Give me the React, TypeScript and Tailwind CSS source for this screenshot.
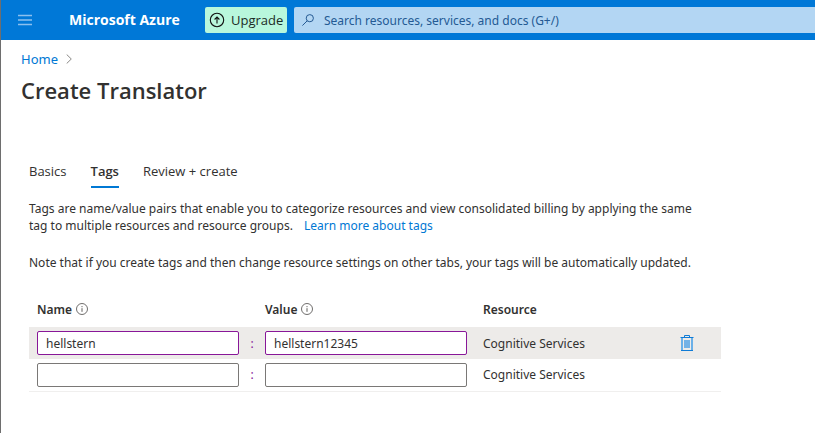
import { useState } from "react";

type Tag = { name: string; value: string };

function InfoIcon() {
  return (
    <svg className="size-3 shrink-0" viewBox="0 0 12 12" fill="none" stroke="#605e5c" aria-hidden="true">
      <circle cx="6" cy="6" r="5.5" strokeWidth="0.9" />
      <path d="M6 5.2v3.6M6 3.1v1.1" strokeWidth="1" />
    </svg>
  );
}

function TrashIcon() {
  return (
    <svg className="h-4 w-3.5" viewBox="0 0 14 16" fill="none" aria-hidden="true">
      <path d="M2 3v12M12 3v12" stroke="#6bb0e8" strokeWidth="2" />
      <rect x="4" y="5" width="6" height="8" fill="#74b2e6" />
      <path d="M0.5 2.5h13M1 15.5h12M4.5 2.5v-2h5v2" stroke="#0f7bd6" strokeWidth="1" />
    </svg>
  );
}

function Header() {
  return (
    <header className="flex h-10 items-center bg-[#0078d7]">
      <button type="button" aria-label="Show portal menu" className="flex h-10 w-12 items-center justify-center">
        <svg className="h-3 w-3.5" viewBox="0 0 14 12" fill="none" stroke="#8cc0ee" aria-hidden="true">
          <path d="M0 1.5h14M0 6h14M0 10.5h14" strokeWidth="1.5" />
        </svg>
      </button>
      <a
        href="#portal"
        className="ml-5 w-34 font-['Open_Sans',sans-serif] text-sm leading-5 font-bold whitespace-nowrap text-white"
      >
        Microsoft Azure
      </a>
      <button
        type="button"
        className="flex h-[26px] w-[82px] shrink-0 items-center gap-1.5 rounded-xs bg-[#b8f7dc] pl-1 font-['Open_Sans',sans-serif] text-[13px] text-[#1b2b25]"
      >
        <svg className="size-4 shrink-0" viewBox="0 0 16 16" fill="none" stroke="#111" aria-hidden="true">
          <circle cx="8" cy="8" r="6.7" strokeWidth="1.1" />
          <path d="M8 11.5v-6M5.6 7.5 8 5.1l2.4 2.4" strokeWidth="1.1" />
        </svg>
        Upgrade
      </button>
      <label className="ml-[7px] flex h-[26px] min-w-0 flex-1 items-center gap-2.5 rounded-l-xs bg-[#b3d6f3] pl-2">
        <svg className="size-3 shrink-0" viewBox="0 0 12 12" fill="none" stroke="#255a93" aria-hidden="true">
          <circle cx="7.8" cy="4.2" r="3.6" />
          <path d="M5.2 6.8.4 11.6" />
        </svg>
        <input
          type="search"
          aria-label="Search resources, services, and docs"
          placeholder="Search resources, services, and docs (G+/)"
          className="min-w-0 flex-1 bg-transparent outline-none placeholder:text-[#245a94]"
        />
      </label>
    </header>
  );
}

function Tabs() {
  const tab = "h-[26px] border-b-2 pb-1.5";
  return (
    <nav role="tablist" className="mt-14 ml-2 flex gap-6 font-['Open_Sans',sans-serif] text-[13px] leading-[18px]">
      <button type="button" role="tab" aria-selected="false" className={`${tab} border-transparent`}>
        Basics
      </button>
      <button type="button" role="tab" aria-selected="true" className={`${tab} border-[#0078d4] font-semibold`}>
        Tags
      </button>
      <button type="button" role="tab" aria-selected="false" className={`${tab} border-transparent`}>
        Review + create
      </button>
    </nav>
  );
}

function TagsTable() {
  const [tags, setTags] = useState<Tag[]>([
    { name: "hellstern", value: "hellstern12345" },
    { name: "", value: "" },
  ]);

  const update = (index: number, change: Partial<Tag>) =>
    setTags(tags.map((tag, i) => (i === index ? { ...tag, ...change } : tag)));

  return (
    <table className="mt-5 w-full table-fixed text-left">
      <colgroup>
        <col className="w-[210px]" />
        <col className="w-[26px]" />
        <col className="w-[202px]" />
        <col />
        <col className="w-[41px]" />
      </colgroup>
      <thead>
        <tr className="h-9">
          <th className="pl-2 font-semibold">
            <span className="flex items-center gap-1">
              Name <InfoIcon />
            </span>
          </th>
          <th aria-hidden="true" />
          <th className="font-semibold">
            <span className="flex items-center gap-1">
              Value <InfoIcon />
            </span>
          </th>
          <th className="pl-4 font-semibold">Resource</th>
          <th aria-hidden="true" />
        </tr>
      </thead>
      <tbody>
        {tags.map((tag, i) => {
          const edited = tag.name !== "" || tag.value !== "";
          const field = edited ? "border-[#881798]" : "border-[#7a7876]";
          return (
            <tr key={i} className={edited ? "h-8 bg-[#edebe9]" : "h-8 border-b border-[#f0efee]"}>
              <td className="pl-2">
                <input
                  aria-label="Tag name"
                  value={tag.name}
                  onChange={(e) => update(i, { name: e.target.value })}
                  className={`block h-6 w-full rounded-xs border bg-white px-2 outline-none ${field}`}
                />
              </td>
              <td className="text-center text-[#881798]">:</td>
              <td>
                <input
                  aria-label="Tag value"
                  value={tag.value}
                  onChange={(e) => update(i, { value: e.target.value })}
                  className={`block h-6 w-full rounded-xs border bg-white px-2 outline-none ${field}`}
                />
              </td>
              <td className="pl-4">Cognitive Services</td>
              <td>
                {edited && (
                  <button type="button" aria-label="Delete tag" className="block" onClick={() => update(i, { name: "", value: "" })}>
                    <TrashIcon />
                  </button>
                )}
              </td>
            </tr>
          );
        })}
      </tbody>
    </table>
  );
}

export default function App() {
  return (
    <div className="min-h-screen border-l border-[#6e6e6e] bg-white font-['Noto_Sans',sans-serif] text-xs leading-[17px] text-[#323130]">
      <Header />
      <main className="px-5 pt-2.5">
        <nav aria-label="Breadcrumb" className="flex items-center gap-2 leading-[18px]">
          <a href="#home" className="text-[13px] text-[#0078d4]">
            Home
          </a>
          <svg className="h-2.5 w-1.5" viewBox="0 0 6 10" fill="none" stroke="#8a8886" aria-hidden="true">
            <path d="M.7.5 5.3 5 .7 9.5" />
          </svg>
        </nav>
        <h1 className="mt-1.5 font-['Open_Sans',sans-serif] text-[22px] leading-8 font-semibold">Create Translator</h1>
        <Tabs />
        <section className="ml-2 max-w-[692px] pt-3">
          <p className="max-w-[684px]">
            Tags are name/value pairs that enable you to categorize resources and view consolidated billing by applying the same
            tag to multiple resources and resource groups.{" "}
            <a href="#learn-tags" className="ml-2 whitespace-nowrap text-[#0078d4]">
              Learn more about tags
            </a>
          </p>
          <p className="mt-5">
            Note that if you create tags and then change resource settings on other tabs, your tags will be automatically updated.
          </p>
          <TagsTable />
        </section>
      </main>
    </div>
  );
}
